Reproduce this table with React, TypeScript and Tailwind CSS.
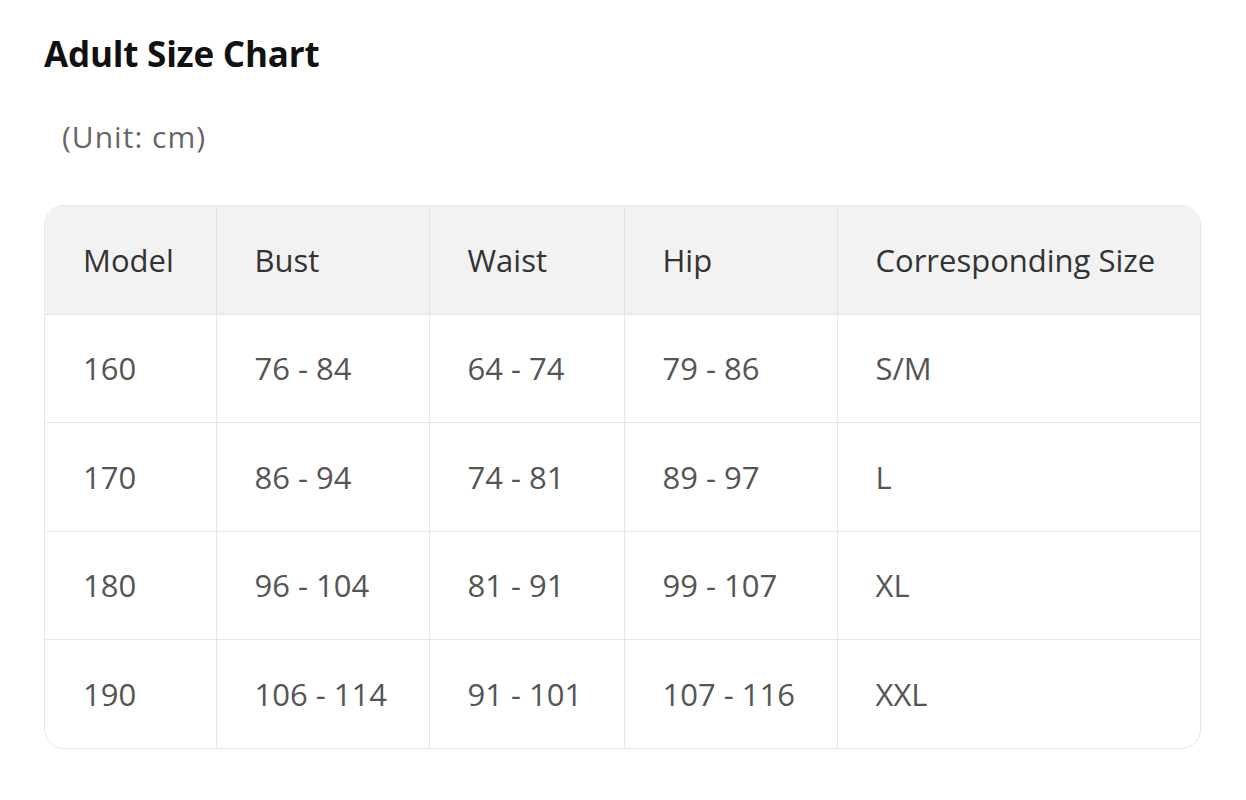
const headers = ["Model", "Bust", "Waist", "Hip", "Corresponding Size"];

const rows = [
  ["160", "76 - 84", "64 - 74", "79 - 86", "S/M"],
  ["170", "86 - 94", "74 - 81", "89 - 97", "L"],
  ["180", "96 - 104", "81 - 91", "99 - 107", "XL"],
  ["190", "106 - 114", "91 - 101", "107 - 116", "XXL"],
];

const widths = ["w-[171px]", "w-[213px]", "w-[195px]", "w-[213px]", ""];

export default function App() {
  return (
    <div className="min-h-screen bg-white font-['Open_Sans',sans-serif] pl-[44px] pt-[33px]">
      <h2 className="text-[35px] font-bold text-[#111] leading-[42px] tracking-[-0.2px]">Adult Size Chart</h2>
      <p className="mt-[42px] ml-[18px] text-[30px] text-[#666] leading-[40px] tracking-[1px]">(Unit: cm)</p>

      <div className="mt-[48px] w-[1157px] border border-[#e6e6e6] rounded-[20px] overflow-hidden">
        <table className="w-full border-collapse table-fixed">
          <colgroup>
            {widths.map((w, i) => (
              <col key={i} className={w} />
            ))}
          </colgroup>
          <thead>
            <tr className="bg-[#f2f2f2] h-[108px]">
              {headers.map((h, i) => (
                <th
                  key={h}
                  className={`text-left font-normal text-[31px] text-[#333] pl-[38px] border-b border-[#e3e3e3] ${
                    i > 0 ? "border-l" : ""
                  }`}
                >
                  {h}
                </th>
              ))}
            </tr>
          </thead>
          <tbody>
            {rows.map((r, ri) => (
              <tr key={ri} className="h-[108.5px]">
                {r.map((c, ci) => (
                  <td
                    key={ci}
                    className={`text-[31px] text-[#555] pl-[38px] border-[#e6e6e6] whitespace-pre ${
                      ci > 0 ? "border-l" : ""
                    } ${ri < rows.length - 1 ? "border-b" : ""}`}
                  >
                    {c}
                  </td>
                ))}
              </tr>
            ))}
          </tbody>
        </table>
      </div>
    </div>
  );
}
